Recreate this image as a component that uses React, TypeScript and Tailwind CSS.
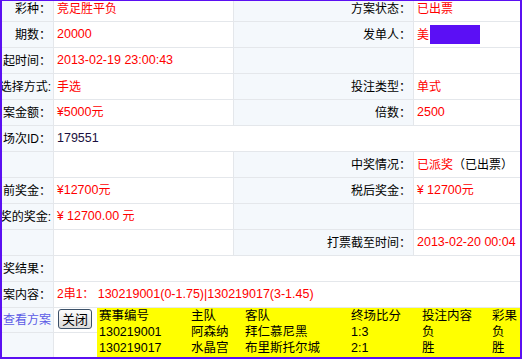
import React from 'react';

const font = { fontFamily: '"Liberation Sans", "Noto Sans CJK SC", sans-serif' };

const Label = ({ children, span = '' }: { children?: React.ReactNode; span?: string }) => (
  <div className={`flex items-center justify-end whitespace-nowrap bg-[#f4f8fc] pr-[2px] text-black ${span}`}>
    <span>{children}</span>
  </div>
);

const Value = ({ children, span = '' }: { children?: React.ReactNode; span?: string }) => (
  <div className={`flex items-center overflow-hidden whitespace-nowrap bg-white pl-[3px] text-[#ff0000] ${span}`}>
    <span>{children}</span>
  </div>
);

const Num = ({ children }: { children: React.ReactNode }) => <span className="text-[12.5px]">{children}</span>;

const matches = [
  { no: '130219001', home: '阿森纳', away: '拜仁慕尼黑', score: '1:3', bet: '负', result: '负' },
  { no: '130219017', home: '水晶宫', away: '布里斯托尔城', score: '2:1', bet: '胜', result: '胜' },
];

export default function App() {
  return (
    <div className="h-[359px] w-[523px] bg-white text-[12px] leading-none" style={font}>
      <div className="h-[359px] w-[522px] overflow-hidden border-t border-r-2 border-b-2 border-l-2 border-[#5b10f2]">
        <div className="-mt-[5px] grid grid-cols-[51px_179px_179px_106px] grid-rows-[repeat(12,25px)_24px_24px] gap-px bg-[#e4e7eb]">
          <Label>彩种：</Label>
          <Value>竞足胜平负</Value>
          <Label>方案状态：</Label>
          <Value>已出票</Value>

          <Label>期数：</Label>
          <Value><Num>20000</Num></Value>
          <Label>发单人：</Label>
          <Value>
            <span className="flex items-center">
              美<span className="ml-px inline-block h-[19px] w-[50px] bg-[#5b0ff5]" />
            </span>
          </Value>

          <Label>起时间：</Label>
          <Value><Num>2013-02-19 23:00:43</Num></Value>
          <Label />
          <Value />

          <Label>选择方式:</Label>
          <Value>手选</Value>
          <Label>投注类型：</Label>
          <Value>单式</Value>

          <Label>案金额：</Label>
          <Value>¥<Num>5000</Num>元</Value>
          <Label>倍数：</Label>
          <Value><Num>2500</Num></Value>

          <Label>场次ID：</Label>
          <Value span="col-span-3"><span className="text-[12.5px] text-[#1a1040]">179551</span></Value>

          <Label />
          <Value />
          <Label>中奖情况：</Label>
          <Value>已派奖<span className="text-black">（已出票）</span></Value>

          <Label>前奖金：</Label>
          <Value>¥<Num>12700</Num>元</Value>
          <Label>税后奖金：</Label>
          <Value>¥ <Num>12700</Num>元</Value>

          <Label>奖的奖金:</Label>
          <Value>¥ <Num>12700.00</Num> 元</Value>
          <Label />
          <Value />

          <Label />
          <Value />
          <Label>打票截至时间：</Label>
          <Value><Num>2013-02-20 00:04</Num></Value>

          <Label>奖结果：</Label>
          <Value span="col-span-3" />

          <Label>案内容：</Label>
          <Value span="col-span-3">
            2串1：&nbsp;<Num>130219001(0-1.75)|130219017(3-1.45)</Num>
          </Value>

          <Label>
            <span className="text-[#5b5be6]">查看方案</span>
          </Label>
          <div className="col-span-3 row-span-2 flex bg-white">
            <div className="flex w-[43px] flex-col gap-px bg-[#e4e7eb]">
              <div className="flex h-[24px] items-start bg-white pl-[4px] pt-px">
                <button className="h-[20px] w-[34px] rounded-[3px] border border-[#3b5068] bg-gradient-to-b from-[#fdfdfd] to-[#dcdcdc] text-[13px] text-black">
                  关闭
                </button>
              </div>
              <div className="h-[24px] bg-white" />
            </div>
            <div className="flex-1 bg-[#ffff00] pl-[2px] text-[12.5px] text-black">
              <div className="grid h-[16px] grid-cols-[92px_54px_106px_71px_70px_1fr] items-center">
                <span>赛事编号</span>
                <span>主队</span>
                <span>客队</span>
                <span>终场比分</span>
                <span>投注内容</span>
                <span>彩果</span>
              </div>
              {matches.map((m) => (
                <div key={m.no} className="grid h-[16px] grid-cols-[92px_54px_106px_71px_70px_1fr] items-center">
                  <span>{m.no}</span>
                  <span>{m.home}</span>
                  <span>{m.away}</span>
                  <span>{m.score}</span>
                  <span>{m.bet}</span>
                  <span>{m.result}</span>
                </div>
              ))}
            </div>
          </div>
          <Label />
        </div>
      </div>
    </div>
  );
}
